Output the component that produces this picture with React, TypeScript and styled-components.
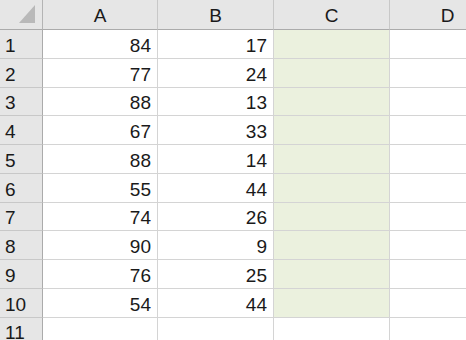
import React from "react";
import styled, { createGlobalStyle } from "styled-components";

const Global = createGlobalStyle`
  html, body { margin: 0; padding: 0; background: #ffffff; overflow: hidden; }
  body { font-family: "Liberation Sans", Arial, sans-serif; }
`;

const Viewport = styled.div`
  width: 466px;
  height: 340px;
  overflow: hidden;
`;

const Sheet = styled.div`
  display: grid;
  grid-template-columns: 43px 115px 116px 116px 116px;
  grid-template-rows: 30px repeat(11, 28.75px);
  width: 506px;
  font-family: "Liberation Sans", Arial, sans-serif;
  font-size: 19px;
  color: #1a1a1a;
`;

const Corner = styled.div`
  box-sizing: border-box;
  background: #e6e6e6;
  border-right: 1px solid #b4b4b4;
  border-bottom: 1px solid #ababab;
  display: flex;
  align-items: flex-start;
  justify-content: flex-end;
  padding: 5px 7px 0 0;
`;

const ColHeader = styled.div`
  box-sizing: border-box;
  background: #e6e6e6;
  border-right: 1px solid #c8c8c8;
  border-bottom: 1px solid #ababab;
  display: flex;
  align-items: center;
  justify-content: center;
  padding-top: 3px;
`;

const RowHeader = styled.div`
  box-sizing: border-box;
  background: #e6e6e6;
  border-right: 1px solid #ababab;
  border-bottom: 1px solid #c8c8c8;
  display: flex;
  align-items: center;
  padding: 4px 0 0 5px;
`;

const Cell = styled.div<{ $shade?: boolean }>`
  box-sizing: border-box;
  background: ${(p) => (p.$shade ? "#ebf1de" : "#ffffff")};
  border-right: 1px solid #d4d4d4;
  border-bottom: 1px solid #d4d4d4;
  display: flex;
  align-items: center;
  justify-content: flex-end;
  padding: 4px 6px 0 0;
`;

const data: [number, number][] = [
  [84, 17],
  [77, 24],
  [88, 13],
  [67, 33],
  [88, 14],
  [55, 44],
  [74, 26],
  [90, 9],
  [76, 25],
  [54, 44],
];

const CornerMark = () => (
  <svg width="16" height="18" viewBox="0 0 16 18">
    <polygon points="16,0 16,18 0,18" fill="#b9b9b9" />
  </svg>
);

export default function App() {
  return (
    <>
      <Global />
      <Viewport>
        <Sheet>
          <Corner>
            <CornerMark />
          </Corner>
          {["A", "B", "C", "D"].map((c) => (
            <ColHeader key={c}>{c}</ColHeader>
          ))}
          {data.map(([a, b], i) => (
            <React.Fragment key={i}>
              <RowHeader>{i + 1}</RowHeader>
              <Cell>{a}</Cell>
              <Cell>{b}</Cell>
              <Cell $shade />
              <Cell />
            </React.Fragment>
          ))}
          <RowHeader>11</RowHeader>
          <Cell />
          <Cell />
          <Cell />
          <Cell />
        </Sheet>
      </Viewport>
    </>
  );
}
